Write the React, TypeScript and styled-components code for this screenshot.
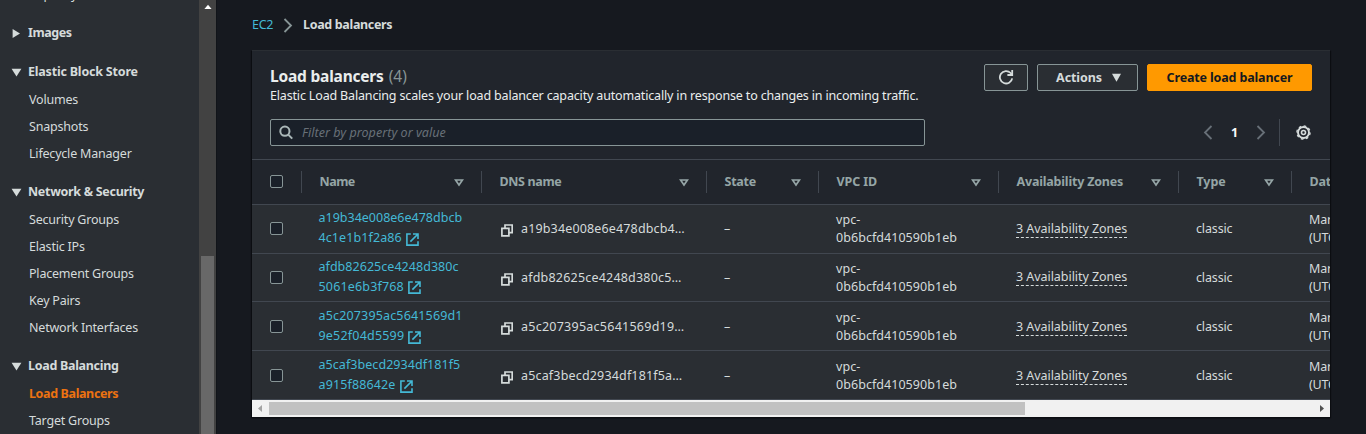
import React from "react";
import styled, { createGlobalStyle, css } from "styled-components";

const GlobalStyle = createGlobalStyle`
  * { box-sizing: border-box; }
  body {
    margin: 0;
    background: #16191f;
    overflow: hidden;
    font-family: "Noto Sans", "Open Sans", sans-serif;
    font-size: 12.5px;
    color: #d5dbdb;
  }
  svg { display: block; flex: none; }
`;

const Page = styled.div`
  display: flex;
  height: 434px;
  overflow: hidden;
`;

const Sidebar = styled.aside`
  display: flex;
  width: 217px;
  flex: none;
  background: #2a2e33;
  border-right: 1px solid #111419;
`;

const Nav = styled.nav`
  width: 199px;
  height: 434px;
  overflow: hidden;
`;

const NavList = styled.div`
  margin-top: -19px;
  display: flex;
  flex-direction: column;
  gap: 11px;
`;

const NavTitle = styled.div`
  height: 28px;
  padding: 0 0 1px 11px;
  display: flex;
  align-items: center;
  gap: 6px;
  font-weight: 700;
`;

const Fit = styled.span<{ $ls?: number }>`
  letter-spacing: ${(p) => p.$ls ?? 0}px;
  white-space: nowrap;
`;

const NavItem = styled.div<{ $active?: boolean }>`
  height: 27px;
  padding: 0 0 1px 29px;
  display: flex;
  align-items: center;
  ${(p) => p.$active && css`color: #ec7211; font-weight: 700;`}
`;

const VScroll = styled.div`
  width: 17px;
  height: 434px;
  background: #424242;
  display: flex;
  flex-direction: column;
  align-items: center;
  padding-top: 4px;
`;

const VThumb = styled.div`
  width: 13px;
  margin-top: 246px;
  flex: 1;
  background: #686868;
`;

const Main = styled.main`
  flex: 1;
  min-width: 0;
  padding: 0 36px 0 35px;
`;

const Crumbs = styled.div`
  height: 50px;
  display: flex;
  align-items: center;
  padding-bottom: 2px;
  svg { margin-top: 2px; }
`;

const CrumbLink = styled.a`
  color: #44b9d6;
  width: 31px;
`;

const CrumbCurrent = styled.span`
  font-weight: 700;
  margin-left: 10px;
`;

const Panel = styled.section`
  height: 367px;
  background: #21252c;
  border-top: 1px solid #2a2e33;
  box-shadow: 0 1px 1px 0 #0c0e12, 1px 1px 1px 0 #0c0e12, -1px 1px 1px 0 #0c0e12;
`;

const PanelTop = styled.div`
  display: flex;
  justify-content: space-between;
  height: 68px;
  padding: 13px 18px 0 18px;
`;

const Title = styled.h2`
  margin: 0;
  font-size: 15.5px;
  line-height: 24px;
  color: #eaeded;
  span + span { color: #879596; font-weight: 400; margin-left: 5px; }
`;

const Description = styled.p`
  margin: -1px 0 0;
  line-height: 18px;
  color: #eaeded;
`;

const Buttons = styled.div`
  display: flex;
  gap: 9px;
`;

const Button = styled.button<{ $w: number; $primary?: boolean }>`
  width: ${(p) => p.$w}px;
  height: 27px;
  padding: 0 0 1px;
  display: flex;
  align-items: center;
  justify-content: center;
  gap: 10px;
  border-radius: 2px;
  font: 700 12.5px "Noto Sans", sans-serif;
  background: ${(p) => (p.$primary ? "#ff9900" : "#2a2e33")};
  border: 1px solid ${(p) => (p.$primary ? "#ff9900" : "#879596")};
  color: ${(p) => (p.$primary ? "#16191f" : "#d5dbdb")};
`;

const ButtonLabel = styled.span`
  display: flex;
  align-items: center;
  gap: 10px;
  padding-left: 2px;
`;

const Tools = styled.div`
  display: flex;
  align-items: flex-start;
  height: 40px;
  padding: 0 19px 0 18px;
`;

const Search = styled.div`
  width: 655px;
  height: 27px;
  border: 1px solid #879596;
  border-radius: 2px;
  background: #1a2029;
  display: flex;
  align-items: center;
  padding: 0 0 1px 8px;
  gap: 9px;
  color: #687078;
  font-style: italic;
  svg { margin-top: 1px; }
`;

const Pager = styled.div`
  margin-left: auto;
  height: 27px;
  display: flex;
  align-items: center;
`;

const PageNumber = styled.span`
  width: 43px;
  text-align: center;
  color: #fafafa;
  font-weight: 700;
  padding-bottom: 1px;
`;

const PagerRule = styled.div`
  width: 1px;
  height: 27px;
  margin: 0 16px 0 13px;
  background: #414750;
`;

const Table = styled.div`
  overflow: hidden;
  border-top: 1px solid #414750;
`;

const columns = css`
  display: grid;
  width: 1200px;
  grid-template-columns: 50px 180px 225px 112px 180px 180px 113px 160px;
  align-items: center;
  border-bottom: 1px solid #414750;
`;

const HeadRow = styled.div`
  ${columns}
  height: 45px;
`;

const HeadCell = styled.div`
  height: 22px;
  display: flex;
  align-items: center;
  justify-content: space-between;
  padding: 0 17px 1px 17.5px;
  border-right: 1px solid #414750;
  color: #95a5a6;
  font-weight: 700;
  &:first-child { padding: 0 0 1px 18px; }
  svg { margin-top: 1px; }
`;

const Row = styled.div`
  ${columns}
  height: 49px;
  background: #2a2e33;
  &:nth-child(3) { height: 48px; }
  &:nth-child(n + 4) { padding-top: 2px; }
`;

const Cell = styled.div`
  padding: 0 0 0 17px;
  line-height: 18px;
`;

const CheckCell = styled(Cell)`
  padding: 0 0 1px 18px;
`;

const NameCell = styled(Cell)`
  padding-left: 16.5px;
`;

const Checkbox = styled.div`
  width: 13px;
  height: 13px;
  border: 1px solid #879596;
  border-radius: 2px;
  background: #1a2029;
`;

const NameLink = styled.a`
  color: #44b9d6;
  display: block;
  line-height: 20px;
  margin-top: -2px;
`;

const NameTail = styled.span`
  display: flex;
  align-items: center;
  gap: 4px;
  svg { margin-top: 2px; }
`;

const Dns = styled.div`
  display: flex;
  align-items: center;
  gap: 8px;
  padding-left: 2px;
  svg { margin-top: 3px; }
`;

const Zones = styled.span`
  display: inline-block;
  line-height: 17px;
  margin-bottom: 1px;
  border-bottom: 1px dashed #d5dbdb;
`;

const HScroll = styled.div`
  height: 17px;
  background: #f1f1f1;
  display: flex;
  align-items: center;
  padding: 0 6px;
`;

const HThumb = styled.div`
  width: 756px;
  height: 13px;
  margin: 0 auto 0 7px;
  background: #c1c1c1;
`;

const NavArrow = ({ open }: { open: boolean }) => (
  <svg width="11" height="10" viewBox="0 0 11 10" fill="#d5dbdb">
    {open ? <path d="M.6 1.8h9.8L5.5 9.6z" /> : <path d="M1.6 1v9l7.4-4.5z" />}
  </svg>
);

const SortIcon = () => (
  <svg width="10" height="9" viewBox="0 0 10 9" fill="none" stroke="#95a5a6" strokeWidth="1.7">
    <path d="M1.6 2h6.8L5 7z" />
  </svg>
);

const Chevron = ({ left, color = "#687078" }: { left?: boolean; color?: string }) => (
  <svg width="10" height="15" viewBox="0 0 10 15" fill="none" stroke={color} strokeWidth="1.8">
    <path d={left ? "M8.5 1L2 7.5 8.5 14" : "M1.5 1L8 7.5 1.5 14"} />
  </svg>
);

const SearchIcon = () => (
  <svg width="14" height="15" viewBox="0 0 14 15" fill="none" stroke="#aab7b8" strokeWidth="2">
    <circle cx="5.9" cy="6.2" r="4.6" />
    <path d="M9.2 9.6l4 4" />
  </svg>
);

const RefreshIcon = () => (
  <svg width="16" height="16" viewBox="0 0 16 16" fill="none" stroke="#d5dbdb" strokeWidth="1.8">
    <path d="M14.2 9.3A6.2 6.2 0 1 1 12.6 4L14 5.6" />
    <path d="M14.2 1v5H9.4" />
  </svg>
);

const GearIcon = () => (
  <svg width="15" height="15" viewBox="0 0 15 15" fill="none" stroke="#d5dbdb">
    <circle cx="7.5" cy="7.5" r="5.5" strokeWidth="1.9" />
    <circle cx="7.5" cy="7.5" r="6.6" strokeWidth="1.3" strokeDasharray="2.6 2.58" />
    <circle cx="7.5" cy="7.5" r="2" strokeWidth="1.6" />
  </svg>
);

const ExternalIcon = () => (
  <svg width="13" height="13" viewBox="0 0 13 13" fill="none" stroke="#44b9d6" strokeWidth="1.6">
    <path d="M4.8 1H.9v11.1H12V8.2" />
    <path d="M7 1h5v5M12 1L4.4 8.6" />
  </svg>
);

const CopyIcon = () => (
  <svg width="12" height="13" viewBox="0 0 12 13" fill="none" stroke="#d5dbdb" strokeWidth="1.7">
    <path d="M.9 4.4h7v7.4h-7z" />
    <path d="M4 4.2V1h7.2v7.7H8" />
  </svg>
);

type Entry = [string, number];
const nav: { title?: Entry; open?: boolean; items: Entry[] }[] = [
  { items: [["Capacity Reservations", -0.2]] },
  { title: ["Images", -0.45], items: [] },
  { title: ["Elastic Block Store", -0.2], open: true, items: [["Volumes", -0.2], ["Snapshots", -0.2], ["Lifecycle Manager", -0.2]] },
  {
    title: ["Network & Security", -0.3],
    open: true,
    items: [["Security Groups", -0.2], ["Elastic IPs", -0.2], ["Placement Groups", -0.2], ["Key Pairs", -0.2], ["Network Interfaces", -0.2]],
  },
  { title: ["Load Balancing", -0.3], open: true, items: [["Load Balancers", -0.37], ["Target Groups", -0.2]] },
];

const heads: Entry[] = [["Name", -0.5], ["DNS name", -0.35], ["State", -0.25], ["VPC ID", -0.1], ["Availability Zones", -0.19], ["Type", -0.1], ["Date Created", -0.2]];

const rows: { a: Entry; b: Entry; dns: Entry }[] = [
  { a: ["a19b34e008e6e478dbcb", 0], b: ["4c1e1b1f2a86", 0.1], dns: ["a19b34e008e6e478dbcb4…", 0.15] },
  { a: ["afdb82625ce4248d380c", 0.04], b: ["5061e6b3f768", 0.17], dns: ["afdb82625ce4248d380c5…", 0.2] },
  { a: ["a5c207395ac5641569d1", 0.16], b: ["9e52f04d5599", 0.2], dns: ["a5c207395ac5641569d19…", 0.25] },
  { a: ["a5caf3becd2934df181f5", 0.06], b: ["a915f88642e", 0.13], dns: ["a5caf3becd2934df181f5a…", 0.17] },
];

export default function App() {
  return (
    <>
      <GlobalStyle />
      <Page>
        <Sidebar>
          <Nav>
            <NavList>
              {nav.map((g, i) => (
                <div key={i}>
                  {g.title && (
                    <NavTitle>
                      <NavArrow open={!!g.open} />
                      <Fit $ls={g.title[1]}>{g.title[0]}</Fit>
                    </NavTitle>
                  )}
                  {g.items.map(([t, ls]) => (
                    <NavItem key={t} $active={t === "Load Balancers"}>
                      <Fit $ls={ls}>{t}</Fit>
                    </NavItem>
                  ))}
                </div>
              ))}
            </NavList>
          </Nav>
          <VScroll>
            <svg width="8" height="6" viewBox="0 0 8 6" fill="#fff"><path d="M4 .8L7.6 5H.4z" /></svg>
            <VThumb />
          </VScroll>
        </Sidebar>
        <Main>
          <Crumbs>
            <CrumbLink><Fit $ls={-0.3}>EC2</Fit></CrumbLink>
            <Chevron color="#879596" />
            <CrumbCurrent><Fit $ls={-0.33}>Load balancers</Fit></CrumbCurrent>
          </Crumbs>
          <Panel>
            <PanelTop>
              <div>
                <Title><Fit $ls={-0.2}>Load balancers</Fit><Fit>(4)</Fit></Title>
                <Description><Fit $ls={-0.163}>Elastic Load Balancing scales your load balancer capacity automatically in response to changes in incoming traffic.</Fit></Description>
              </div>
              <Buttons>
                <Button $w={44}><RefreshIcon /></Button>
                <Button $w={101}>
                  <ButtonLabel>
                    <Fit $ls={-0.1}>Actions</Fit>
                    <svg width="9" height="9" viewBox="0 0 9 9" fill="#d5dbdb"><path d="M0 .8h9L4.5 8.8z" /></svg>
                  </ButtonLabel>
                </Button>
                <Button $w={165} $primary><Fit $ls={-0.15}>Create load balancer</Fit></Button>
              </Buttons>
            </PanelTop>
            <Tools>
              <Search><SearchIcon /><Fit $ls={0.04}>Filter by property or value</Fit></Search>
              <Pager>
                <Chevron left />
                <PageNumber>1</PageNumber>
                <Chevron />
                <PagerRule />
                <GearIcon />
              </Pager>
            </Tools>
            <Table>
              <HeadRow>
                <HeadCell><Checkbox /></HeadCell>
                {heads.map(([t, ls]) => (
                  <HeadCell key={t}><Fit $ls={ls}>{t}</Fit><SortIcon /></HeadCell>
                ))}
              </HeadRow>
              {rows.map((r) => (
                <Row key={r.a[0]}>
                  <CheckCell><Checkbox /></CheckCell>
                  <NameCell>
                    <NameLink>
                      <Fit $ls={r.a[1]}>{r.a[0]}</Fit>
                      <NameTail><Fit $ls={r.b[1]}>{r.b[0]}</Fit><ExternalIcon /></NameTail>
                    </NameLink>
                  </NameCell>
                  <Cell><Dns><CopyIcon /><Fit $ls={r.dns[1]}>{r.dns[0]}</Fit></Dns></Cell>
                  <Cell>–</Cell>
                  <Cell><Fit $ls={0.05}>vpc-<br />0b6bcfd410590b1eb</Fit></Cell>
                  <Cell><Zones><Fit $ls={-0.05}>3 Availability Zones</Fit></Zones></Cell>
                  <Cell><Fit $ls={-0.15}>classic</Fit></Cell>
                  <Cell><Fit $ls={-0.2}>March 1, 2023<br />(UTC+00:00)</Fit></Cell>
                </Row>
              ))}
            </Table>
            <HScroll>
              <svg width="4" height="7" viewBox="0 0 4 7" fill="#a3a3a3"><path d="M4 0v7L0 3.5z" /></svg>
              <HThumb />
              <svg width="4" height="7" viewBox="0 0 4 7" fill="#505050"><path d="M0 0v7l4-3.5z" /></svg>
            </HScroll>
          </Panel>
        </Main>
      </Page>
    </>
  );
}
